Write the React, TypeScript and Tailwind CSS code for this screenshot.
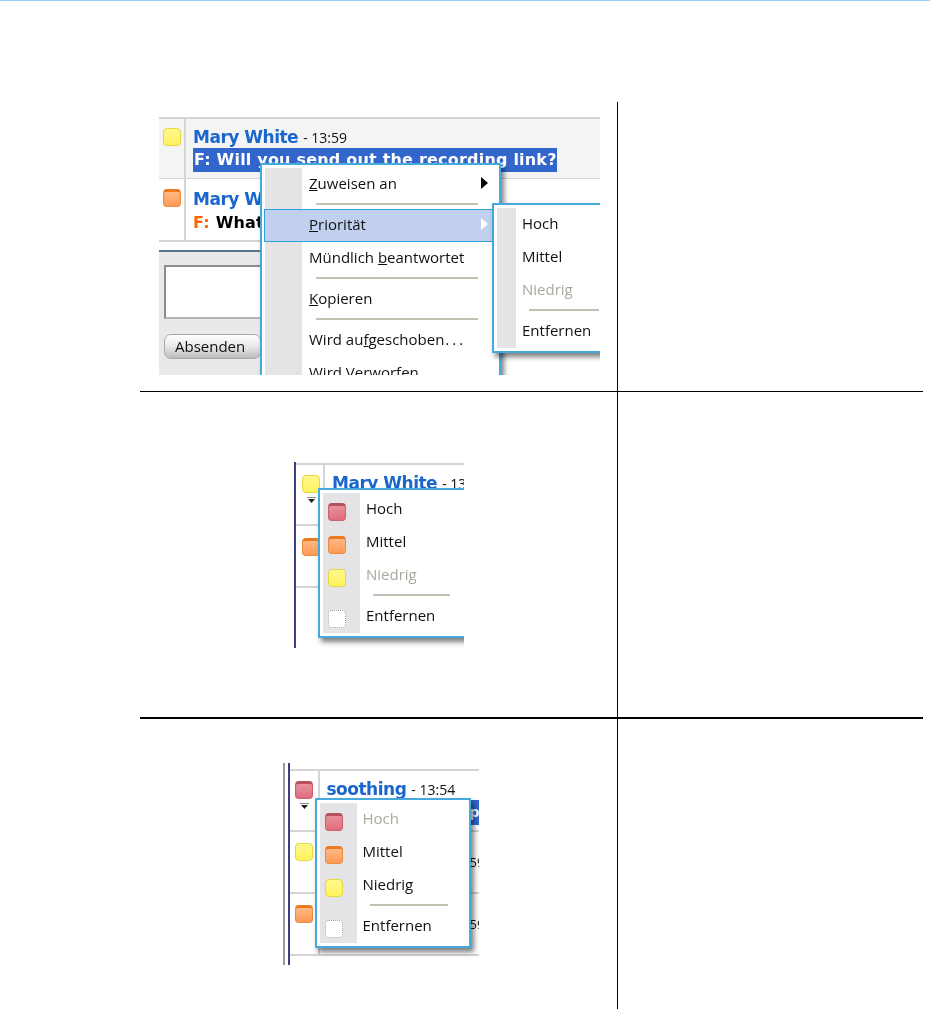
import React from "react";

type Level = "red" | "orange" | "yellow" | "none";

type MenuEntry =
  | { sep: true }
  | { sep?: false; label: React.ReactNode; level?: Level; disabled?: boolean; active?: boolean; arrow?: "dark" | "light" };

const FLAG_STYLES: Record<Level, string> = {
  red: "border-[#c9606c] border-t-[3px] border-t-[#b8505c] bg-linear-to-b from-[#e8909c] to-[#e06c7c]",
  orange: "border-[#ee8a3c] border-t-[3px] border-t-[#ee7a20] bg-linear-to-b from-[#ffb884] to-[#ff9a54]",
  yellow: "border-[#e6d83c] bg-linear-to-b from-[#fff88c] to-[#fff25c]",
  none: "border-dotted border-[#a0a0a0] bg-white",
};

const Flag = ({ level }: { level: Level }) => (
  <span className={`block h-[18px] w-[18px] shrink-0 rounded-[4px] border ${FLAG_STYLES[level]}`} />
);

const TinyArrow = () => (
  <svg width="9" height="6" viewBox="0 0 9 6" className="block">
    <path d="M0 0h9v1H0z" fill="#888" />
    <path d="M1 2h7L4.500 6z" fill="#222" />
  </svg>
);

// the context menu, with its grey icon gutter on the left
const Menu = ({ entries, gutter, inset = 0, className }: { entries: MenuEntry[]; gutter: number; inset?: number; className: string }) => (
  <div
    className={`absolute border-2 border-[#45a9dc] bg-white p-[3px] font-['Open_Sans',sans-serif] text-[15px] leading-[33px] text-[#111] shadow-[3px_4px_5px_rgba(0,0,0,0.5)] ${className}`}
  >
    <div className="relative">
      <div className="absolute inset-y-0 left-0 bg-[#e4e4e6]" style={{ width: gutter }} />
      {entries.map((entry, i) =>
        entry.sep ? (
          <div key={i} className="relative flex h-2 items-start pt-[2px]" style={{ paddingLeft: gutter + 13 + inset }}>
            <div className="mr-[18px] h-0.5 grow bg-[#c4c0b4]" />
          </div>
        ) : (
          <div
            key={i}
            className={`relative flex h-[33px] items-center ${entry.active ? "-mx-px border border-[#2fa0d8] bg-[#c0d0ee]" : ""} ${entry.disabled ? "text-[#aaa89e]" : ""}`}
          >
            <div className="flex h-full items-center pl-[5px] pt-[5px]" style={{ width: gutter }}>
              {entry.level && <Flag level={entry.level} />}
            </div>
            <span className="mb-[2px] whitespace-nowrap" style={{ marginLeft: 6 + inset }}>{entry.label}</span>
            {entry.arrow && (
              <span
                className={`absolute right-[8px] mb-[3px] h-0 w-0 border-y-[6px] border-l-[7px] border-y-transparent ${entry.arrow === "dark" ? "border-l-black" : "border-l-white"}`}
              />
            )}
          </div>
        ),
      )}
    </div>
  </div>
);

const Name = ({ children }: { children: React.ReactNode }) => (
  <span className="font-['DejaVu_Sans',sans-serif] text-[17px] font-bold tracking-[-0.5px] text-[#1a66cc]">{children}</span>
);

const Time = ({ children }: { children: React.ReactNode }) => (
  <span className="ml-[5px] font-['Open_Sans',sans-serif] text-[14px] text-[#111]">{children}</span>
);

const FlagCell = ({ level, arrow, className }: { level: Level; arrow?: boolean; className: string }) => (
  <div className={`flex shrink-0 flex-col items-center border-r-2 border-[#d4d4d4] pt-3 ${className}`}>
    <Flag level={level} />
    {arrow && <div className="mt-1"><TinyArrow /></div>}
  </div>
);

const MainShot = () => (
  <div className="relative h-[258px] w-[441px] overflow-hidden bg-white blur-[0.3px]">
    <div className="flex h-[62px] border-y-2 border-b border-[#d4d4d4] bg-[#f4f4f4]">
      <FlagCell level="yellow" className="w-[27px] pt-[9px]" />
      <div className="pl-[7px] pt-[5px] leading-[26px]">
        <div className="h-[24px]">
          <Name>Mary White</Name>
          <Time>- 13:59</Time>
        </div>
        <div className="bg-[#3366cc] pl-px font-['DejaVu_Sans',sans-serif] text-[16px] font-bold leading-[24px] tracking-[0.2px] text-white">
          F: Will you send out the recording link?
        </div>
      </div>
    </div>
    <div className="flex h-[63px] border-b-2 border-[#d4d4d4]">
      <FlagCell level="orange" className="w-[27px] pt-[10px]" />
      <div className="pl-[7px] pt-[7px] leading-[26px]">
        <div className="h-[25px]">
          <Name>Mary White</Name>
        </div>
        <div className="font-['DejaVu_Sans',sans-serif] text-[16px] font-bold leading-[24px] tracking-[0.2px] text-black">
          <span className="text-[#ff6600]">F: </span>What time is it?
        </div>
      </div>
    </div>
    <div className="mt-[8px] h-[125px] w-[230px] border-t-2 border-[#5c7490] bg-[#e9e9e9] pl-[5px] pt-[13px]">
      <div className="h-[54px] border-2 border-[#8c8c8c] border-b-[#b4b4b4] border-r-[#b4b4b4] bg-white" />
      <div className="mt-[15px] flex h-[25px] w-[97px] items-center rounded-[7px] border border-[#a8a8a8] bg-linear-to-b from-white via-[#e8e8e8] to-[#bcbcbc] pl-[10px] font-['Open_Sans',sans-serif] text-[15px] text-[#111]">
        Absenden
      </div>
    </div>
    <Menu
      gutter={37}
      inset={1}
      className="left-[101px] top-[46px] w-[241px]"
      entries={[
        { label: <><u>Z</u>uweisen an</>, arrow: "dark" },
        { sep: true },
        { label: <><u>P</u>riorität</>, arrow: "light", active: true },
        { label: <>Mündlich <u>b</u>eantwortet</> },
        { sep: true },
        { label: <><u>K</u>opieren</> },
        { sep: true },
        { label: <>Wird au<u>f</u>geschoben<span className="ml-px tracking-[3px]">...</span></> },
        { label: "Wird Verworfen" },
      ]}
    />
    <Menu
      gutter={19}
      className="left-[333px] top-[86px] w-[130px]"
      entries={[
        { label: "Hoch" },
        { label: "Mittel" },
        { label: "Niedrig", disabled: true },
        { sep: true },
        { label: "Entfernen" },
      ]}
    />
  </div>
);

const MidShot = () => (
  <div className="relative h-[186px] w-[170px] overflow-hidden border-l-2 border-[#3a3f80] bg-white blur-[0.3px]">
    <div className="mt-px flex h-[63px] border-y-2 border-[#d4d4d4]">
      <FlagCell level="yellow" arrow className="w-[29px] pl-[3px] pt-[10px]" />
      <div className="whitespace-nowrap pl-[7px] pt-[6px]">
        <Name>Mary White</Name>
        <Time>- 13:59</Time>
      </div>
    </div>
    <div className="flex h-[62px] border-b-2 border-[#d4d4d4]">
      <FlagCell level="orange" className="w-[29px] pl-[3px]" />
    </div>
    <Menu
      gutter={37}
      className="left-[22px] top-[26px] w-[155px]"
      entries={[
        { label: "Hoch", level: "red" },
        { label: "Mittel", level: "orange" },
        { label: "Niedrig", level: "yellow", disabled: true },
        { sep: true },
        { label: "Entfernen", level: "none" },
      ]}
    />
  </div>
);

const BottomShot = () => (
  <div className="relative h-[202px] w-[198px] overflow-hidden bg-white blur-[0.3px]">
    <div className="absolute inset-y-0 left-[2px] w-[7px] border-x-2 border-l-[#9a9a9a] border-r-[#3a3f80]" />
    <div className="ml-[9px] mt-[6px] flex h-[63px] border-y-2 border-[#d4d4d4]">
      <FlagCell level="red" arrow className="w-[30px] pl-[1px] pt-[10px]" />
      <div className="whitespace-nowrap pl-[7px] pt-[6px]">
        <Name>soothing</Name>
        <Time>- 13:54</Time>
      </div>
    </div>
    <div className="ml-[9px] flex h-[62px] border-b-2 border-[#d4d4d4]">
      <FlagCell level="yellow" className="w-[30px] pl-[1px] pt-[11px]" />
    </div>
    <div className="ml-[9px] flex h-[62px] border-b-2 border-[#d4d4d4]">
      <FlagCell level="orange" className="w-[30px] pl-[1px] pt-[11px]" />
    </div>
    <div className="absolute left-[189px] top-[37px] h-[25px] w-[9px] overflow-hidden bg-[#3366cc] font-['DejaVu_Sans',sans-serif] text-[14px] font-bold leading-[24px] text-white">
      p
    </div>
    <div className="absolute left-[189px] top-[90px] w-[9px] overflow-hidden font-['Open_Sans',sans-serif] text-[13px] text-[#111]">59</div>
    <div className="absolute left-[189px] top-[152px] w-[9px] overflow-hidden font-['Open_Sans',sans-serif] text-[13px] text-[#111]">59</div>
    <Menu
      gutter={37}
      className="left-[34px] top-[35px] w-[156px]"
      entries={[
        { label: "Hoch", level: "red", disabled: true },
        { label: "Mittel", level: "orange" },
        { label: "Niedrig", level: "yellow" },
        { sep: true },
        { label: "Entfernen", level: "none" },
      ]}
    />
  </div>
);

export default function App() {
  return (
    <div className="h-[1009px] w-[930px] overflow-hidden bg-white">
      <div className="h-px bg-[#99ccff]" />
      <div className="ml-[140px] mt-[101px] grid w-[783px] grid-cols-[478px_305px] grid-rows-[290px_327px_290px]">
        <div className="border-b border-r border-black pl-[19px] pt-[15px]">
          <MainShot />
        </div>
        <div className="border-b border-black" />
        <div className="flex justify-center border-b-2 border-r border-black pl-px pt-[70px]">
          <MidShot />
        </div>
        <div className="border-b-2 border-black" />
        <div className="flex justify-center border-r border-black pl-[2px] pt-[44px]">
          <BottomShot />
        </div>
        <div />
      </div>
    </div>
  );
}
